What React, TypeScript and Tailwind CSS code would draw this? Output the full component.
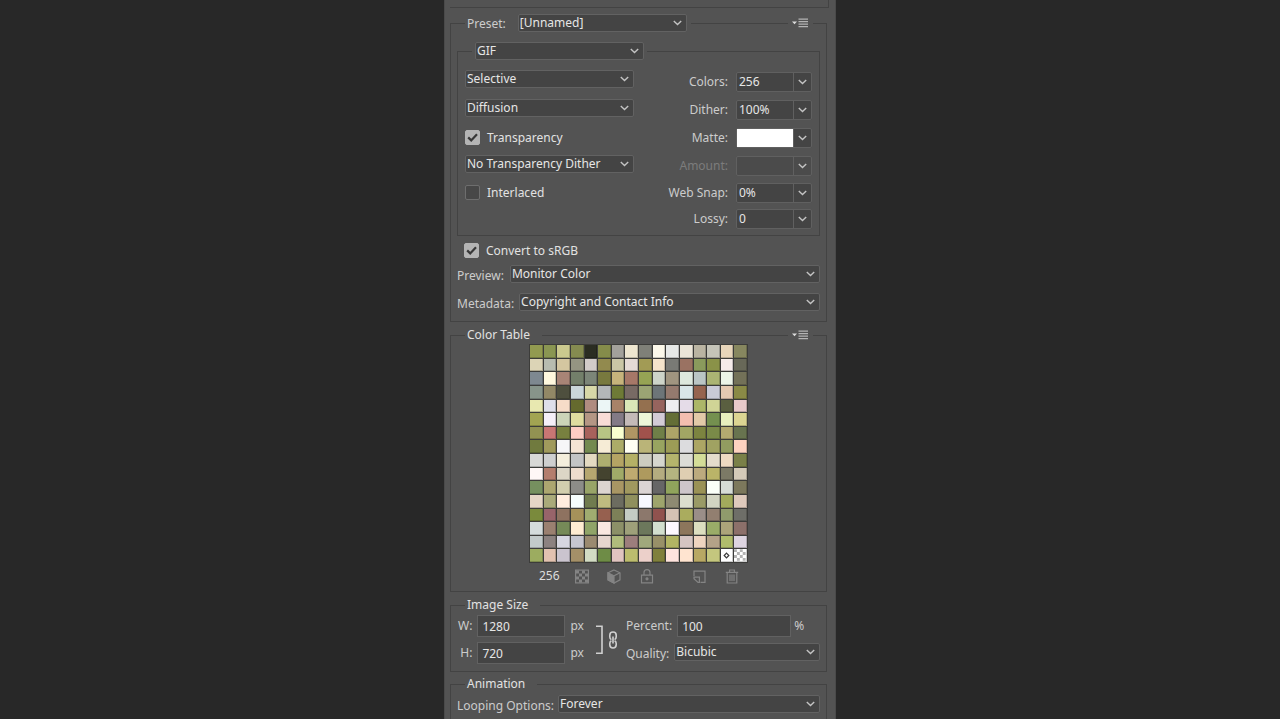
import React from 'react';

const COLOR_ROWS: string[] = [
    '929a50 8a9652 cbc98e 858b50 2b2d22 858c4a a3a19b eee6d0 7f8078 fcf8ea e6e8e6 ebe5d8 bab4a2 c5c4b8 e7d5ba 87875f',
    'dcd4b6 b8bcb0 d4c6a0 959582 d2cbc8 928a4e cac6a6 e5dad6 a29b55 f5e4cb 797a75 9a7262 8a9a5c 8a9248 f6ecea 686858',
    '7e8890 fff8de a88476 737f6a 7c8578 78793e c6b47c a67868 96a354 cdd4c9 a09580 dde8dd bac5c4 abb473 ecf4e8 737158',
    '87948a 928866 4e4f3e cad6da d8d8a8 b4b7b8 6e7a36 786a64 9ba474 6d7578 957a6e d9e6e8 96644f c9cad6 e5c9b2 8a8a46',
    'e8e8b0 dedfea f6dcc8 656a2e b08c80 ecf6f6 a88268 dbe8b8 94704f 96645e eeeef0 e5dce8 acb668 d0d496 5a5f40 e8caca',
    'a2a452 f5eff8 ccd4b8 dfdca0 b49684 f8dcd6 837a86 c4bab8 ecf6d8 d2cbd6 646e36 f4beb0 e2c9a8 74904f e8efbe dcd592',
    '929252 c87674 78803f fdccc4 a8625c b8c484 f9ffd0 b09664 a1524c 6f7f48 ada468 a2a664 7c8440 7a8a48 b4aa70 68744f',
    '707a3e a09a5c f6f6f8 f5e4d4 748a50 f6ecd6 acac68 fffff4 bab478 98a460 9c9c56 dcdcde aca664 a0a262 929c60 fdd2c0',
    'd8d8d6 cecfcf f4eedc c3c4c5 e4dac2 adae70 b4a464 b4b066 ccccc0 d5d6ce b4b46c dcdcd6 d4dd98 e4dccc eedac2 7a8048',
    'fff7f6 b47e6e dcd6c6 eedccd b6a670 44432f a0aa68 beaa70 ae9a5e b4ac80 b4b480 dfceb2 bcaa7e bab468 7c7a66 d4cab8',
    '76905f aca670 d2ceae 8c8c88 98a468 dcd4d0 a89664 a0985f dad4d4 666666 90a45c cdc6ca 9a9256 fafff8 d6dcd6 7c785c',
    'e6d6c6 aaaa7a ffecde f6fefe 707c4f bfbb80 6c6c60 90905e f6f8ff 9ea46c 8e8a72 dcdece 9a9a66 d2d4c2 a2ab5c dfcabc',
    '7a8a3c 98646a 8e7260 a6925a a0ac70 96604f 7d8058 c4ccc4 8c786c 90524e d4c2b4 aaac5e 9a8e88 927f70 909b6c 6e6e68',
    'd4dcdc 9a8070 768a58 ffecd2 90a468 fae8e0 8c9068 9ea07a 6c785c d2dece fdf8ff 8c765c dcdec0 9aac68 aca47a 8c706a',
    'c2caca 8c8280 d6d6e0 c6c6d0 9a8a70 e6d6ce b0bc7c 9c7e7c a0a87c 989068 b2b464 d4c4c2 eed4c0 b4a288 b0bc6c ddd4e0',
    '9cac60 e2c2b0 cac4ce a49068 d2dcc4 6e8c46 e0c4c0 bcbc6e ecd0ca 80803c ffe4de ffe4d0 b8a864 c4c67e ffffff ffffff',
];

const SWATCHES = COLOR_ROWS.flatMap((row) => row.split(' '));

const Chevron: React.FC = () => (
    <svg width="9" height="6" viewBox="0 0 9 6" fill="none" stroke="#c4c4c4" strokeWidth="1.4" aria-hidden="true">
        <path d="M0.8 0.9 4.5 4.5 8.2 0.9" />
    </svg>
);

interface SelectProps {
    id: string;
    options: string[];
    label?: string;
    className?: string;
}

const Select: React.FC<SelectProps> = ({ id, options, label, className = 'w-[169px]' }) => (
    <div className={`relative h-[18px] ${className}`}>
        <select
            id={id}
            aria-label={label}
            className="block h-full w-full appearance-none rounded-xs border border-[#626262] bg-[#444444] pr-5 pl-px leading-4 text-[#e6e6e6] outline-none"
        >
            {options.map((o) => (
                <option key={o}>{o}</option>
            ))}
        </select>
        <span className="pointer-events-none absolute inset-y-0 right-[5px] flex items-center">
            <Chevron />
        </span>
    </div>
);

interface ComboProps {
    id: string;
    label: string;
    value: string;
    disabled?: boolean;
    swatch?: boolean;
    className?: string;
}

const Combo: React.FC<ComboProps> = ({ id, label, value, disabled, swatch, className = 'mt-2' }) => (
    <div className={`flex h-5 items-center justify-end ${className}`}>
        <label htmlFor={id} className={`mr-2 ${disabled ? 'text-[#7c7c7c]' : 'text-[#cccccc]'}`}>
            {label}
        </label>
        <div className={`flex h-full w-[76px] rounded-xs border border-[#606060] ${disabled ? 'bg-[#4b4b4b]' : 'bg-[#444444]'}`}>
            {swatch ? (
                <button id={id} type="button" className="w-14 bg-white" />
            ) : (
                <input
                    id={id}
                    defaultValue={value}
                    disabled={disabled}
                    className="w-14 bg-transparent pl-[2px] text-[#e6e6e6] outline-none"
                />
            )}
            <button
                type="button"
                disabled={disabled}
                aria-label={`${label} options`}
                className="flex flex-1 items-center justify-center border-l border-[#606060]"
            >
                <Chevron />
            </button>
        </div>
    </div>
);

const Checkbox: React.FC<{ id: string; label: string; checked?: boolean; className?: string }> = ({
    id,
    label,
    checked,
    className = '',
}) => (
    <div className={`flex h-[15px] items-center ${className}`}>
        <span className="relative flex">
            <input
                id={id}
                type="checkbox"
                defaultChecked={checked}
                className="peer h-[15px] w-[15px] appearance-none rounded-xs border border-[#6e6e6e] bg-[#474747] checked:border-[#b4b4b4] checked:bg-[#b4b4b4]"
            />
            <svg
                className="pointer-events-none absolute inset-0 hidden peer-checked:block"
                width="15"
                height="15"
                viewBox="0 0 15 15"
                fill="none"
                stroke="#383838"
                strokeWidth="2.2"
                aria-hidden="true"
            >
                <path d="M3.2 7.4 6.2 10.4 12 4.2" />
            </svg>
        </span>
        <label htmlFor={id} className="ml-[7px] text-[#e2e2e2]">
            {label}
        </label>
    </div>
);

const MenuButton: React.FC<{ label: string }> = ({ label }) => (
    <button type="button" aria-label={label} className="mr-[13px] ml-auto bg-[#535353] px-1">
        <svg width="17" height="10" viewBox="0 0 17 10" aria-hidden="true">
            <path d="M0 3.5h5L2.5 6.3z" fill="#dcdcdc" />
            <path d="M6.5 1.2h9.5M6.5 3.7h9.5M6.5 6.2h9.5M6.5 8.7h9.5" stroke="#b4b4b4" strokeWidth="1.3" />
        </svg>
    </button>
);

const Group: React.FC<{ header: React.ReactNode; className?: string; children: React.ReactNode }> = ({
    header,
    className = '',
    children,
}) => (
    <section className={`border border-[#434343] ${className}`}>
        <div className="-mt-[10px] flex h-[18px] items-center pl-[14px]">{header}</div>
        {children}
    </section>
);

const Title: React.FC<{ children: React.ReactNode }> = ({ children }) => (
    <h2 className="bg-[#535353] pr-3 pl-[2px] text-[#e2e2e2]">{children}</h2>
);

const TextField: React.FC<{ id: string; value: string; className: string }> = ({ id, value, className }) => (
    <input
        id={id}
        defaultValue={value}
        className={`h-[22px] border border-[#616161] bg-[#444444] pl-1 text-[#e6e6e6] outline-none ${className}`}
    />
);

const ToolButton: React.FC<{ label: string; className?: string; children: React.ReactNode }> = ({
    label,
    className = '',
    children,
}) => (
    <button type="button" aria-label={label} className={className}>
        <svg width="14" height="15" viewBox="0 0 14 15" fill="none" stroke="#848484" strokeWidth="1.2">
            {children}
        </svg>
    </button>
);

const ColorTable: React.FC = () => (
    <div className="mx-auto grid h-[219px] w-[219px] grid-cols-[repeat(16,minmax(0,1fr))] grid-rows-[repeat(16,minmax(0,1fr))] gap-px bg-[#3c3c3a] p-px">
        {SWATCHES.map((color, i) => (
            <div
                key={i}
                className="flex items-center justify-center border-r border-b border-black/20"
                style={{ backgroundColor: `#${color}` }}
            >
                {i === 254 && (
                    <svg width="7" height="7" viewBox="0 0 7 7" fill="none" stroke="#3a3a3a" strokeWidth="1.2">
                        <path d="M3.5 1.2 5.8 3.5 3.5 5.8 1.2 3.5z" />
                    </svg>
                )}
                {i === 255 && (
                    <svg width="12" height="12" viewBox="0 0 12 12" fill="#b4b4b4">
                        <path d="M0 0h3v3H0zM6 0h3v3H6zM3 3h3v3H3zM9 3h3v3H9zM0 6h3v3H0zM6 6h3v3H6zM3 9h3v3H3zM9 9h3v3H9z" />
                    </svg>
                )}
            </div>
        ))}
    </div>
);

const App: React.FC = () => {
    return (
        <div className="h-screen overflow-hidden bg-[#282828] font-['Noto_Sans','Open_Sans',sans-serif] text-[12px] leading-4 text-[#cccccc]">
            <main className="mx-auto min-h-full w-full max-w-[392px] border-x border-[#4a4a4a] bg-[#535353] pr-2 pl-[5px]">
                <div className="-mr-[2px] h-2 border-r border-b border-[#434343]" />

                <Group
                    className="mt-[15px] pb-[9px]"
                    header={
                        <>
                            <label htmlFor="preset" className="bg-[#535353] pt-[2px] pr-3 pl-[2px]">Preset:</label>
                            <div className="bg-[#535353] pr-1">
                                <Select id="preset" options={['[Unnamed]']} />
                            </div>
                            <MenuButton label="Preset menu" />
                        </>
                    }
                >
                    <div className="px-[6px]">
                        <Group
                            className="mt-[19px] pb-[6px]"
                            header={
                                <div className="bg-[#535353] px-[3px]">
                                    <Select id="format" label="File format" options={['GIF', 'JPEG', 'PNG-8', 'PNG-24', 'WBMP']} />
                                </div>
                            }
                        >
                            <div className="flex justify-between px-[7px]">
                                <div className="pt-[10px]">
                                    <Select id="reduction" label="Color reduction" options={['Selective', 'Perceptual', 'Adaptive']} />
                                    <Select id="dither-method" label="Dither method" className="mt-[11px] w-[169px]" options={['Diffusion', 'Pattern', 'Noise']} />
                                    <Checkbox id="transparency" label="Transparency" checked className="mt-[13px]" />
                                    <Select id="trans-dither" label="Transparency dither" className="mt-[10px] w-[169px]" options={['No Transparency Dither']} />
                                    <Checkbox id="interlaced" label="Interlaced" className="mt-3" />
                                </div>
                                <div>
                                    <Combo id="colors" label="Colors:" value="256" className="mt-3" />
                                    <Combo id="dither" label="Dither:" value="100%" />
                                    <Combo id="matte" label="Matte:" value="" swatch />
                                    <Combo id="amount" label="Amount:" value="" disabled />
                                    <Combo id="websnap" label="Web Snap:" value="0%" className="mt-[7px]" />
                                    <Combo id="lossy" label="Lossy:" value="0" className="mt-[6px]" />
                                </div>
                            </div>
                        </Group>
                        <Checkbox id="srgb" label="Convert to sRGB" checked className="mt-[7px] ml-[7px]" />
                        <div className="mt-[6px] flex items-center">
                            <label htmlFor="preview" className="pt-1">Preview:</label>
                            <Select id="preview" className="ml-[6px] flex-1" options={['Monitor Color']} />
                        </div>
                        <div className="mt-2 flex items-center">
                            <label htmlFor="metadata" className="pt-1">Metadata:</label>
                            <Select id="metadata" className="ml-[5px] flex-1" options={['Copyright and Contact Info']} />
                        </div>
                    </div>
                </Group>

                <Group
                    className="mt-[13px] pb-[7px]"
                    header={
                        <>
                            <Title>Color Table</Title>
                            <MenuButton label="Color table menu" />
                        </>
                    }
                >
                    <ColorTable />
                    <div className="mt-[5px] flex items-center pl-[88px]">
                        <span className="w-[36px] text-[#dddddd]">256</span>
                        <ToolButton label="Map to transparent">
                            <rect x="0.6" y="1.1" width="12.8" height="12.8" />
                            <path d="M1 1.5h3v3H1zM7 1.5h3v3H7zM4 4.5h3v3H4zM10 4.5h3v3h-3zM1 7.5h3v3H1zM7 7.5h3v3H7zM4 10.5h3v3H4zM10 10.5h3v3h-3z" fill="#848484" stroke="none" />
                        </ToolButton>
                        <ToolButton label="Web shift" className="ml-[18px]">
                            <path d="M7 1 13 3.8V10.8L7 14 1 10.8V3.8z" />
                            <path d="M1 3.8 7 6.8V14L1 10.8z" fill="#848484" />
                            <path d="M7 6.8 13 3.8" />
                        </ToolButton>
                        <ToolButton label="Lock color" className="ml-[19px]">
                            <path d="M1.5 6.2h11v7.6h-11zM4 6V3.6a3 3 0 0 1 6 0V6" />
                            <circle cx="7" cy="9.8" r="1" fill="#848484" />
                        </ToolButton>
                        <ToolButton label="New color" className="ml-[38px]">
                            <path d="M2 7V2.1h11V13.4H8.5" />
                            <path d="M2 8.2h5.4v5.2H6L2 9.8z" />
                        </ToolButton>
                        <ToolButton label="Delete color" className="ml-[19px]">
                            <path d="M0.8 3.3h12.4M4.6 3V1h4.8v2M2.2 3.6V14h9.6V3.6M5 5.5v6.5M7 5.5v6.5M9 5.5v6.5" />
                        </ToolButton>
                    </div>
                </Group>

                <Group className="mt-[13px] pb-[7px]" header={<Title>Image Size</Title>}>
                    <div className="mt-px flex items-start pr-[6px] pl-[7px]">
                        <div className="grid grid-cols-[auto_88px_auto] items-center gap-x-[5px] gap-y-[5px]">
                            <label htmlFor="width" className="text-right">W:</label>
                            <TextField id="width" value="1280" className="w-full" />
                            <span>px</span>
                            <label htmlFor="height" className="text-right">H:</label>
                            <TextField id="height" value="720" className="w-full" />
                            <span>px</span>
                        </div>
                        <button type="button" aria-label="Constrain proportions" className="mt-[10px] ml-3">
                            <svg width="22" height="30" viewBox="0 0 22 30" fill="none" stroke="#d0d0d0" strokeWidth="1.6">
                                <path d="M0 1.3h6V28.3H0" />
                                <path d="M15.4 14.6A3 3 0 0 1 13.8 12v-1.8a3.2 3.2 0 0 1 6.4 0V12a3 3 0 0 1-1.6 2.6M15.4 15.8a3 3 0 0 0-1.6 2.6v1.4a3.2 3.2 0 0 0 6.4 0v-1.4a3 3 0 0 0-1.6-2.6M17 11.5v7" />
                            </svg>
                        </button>
                        <div className="ml-2 flex-1">
                            <div className="flex items-center">
                                <label htmlFor="percent" className="mr-[5px]">Percent:</label>
                                <TextField id="percent" value="100" className="w-[114px]" />
                                <span className="ml-[3px]">%</span>
                            </div>
                            <div className="mt-[5px] flex items-center">
                                <label htmlFor="quality" className="mr-[5px] pt-1">Quality:</label>
                                <Select id="quality" className="flex-1" options={['Bicubic', 'Bilinear', 'Nearest Neighbor']} />
                            </div>
                        </div>
                    </div>
                </Group>

                <Group className="mt-3 pb-10" header={<Title>Animation</Title>}>
                    <div className="mt-px flex items-center px-[6px]">
                        <label htmlFor="looping" className="mr-1 pt-1">Looping Options:</label>
                        <Select id="looping" className="flex-1" options={['Forever', 'Once', 'Other...']} />
                    </div>
                </Group>
            </main>
        </div>
    );
};

export default App;
